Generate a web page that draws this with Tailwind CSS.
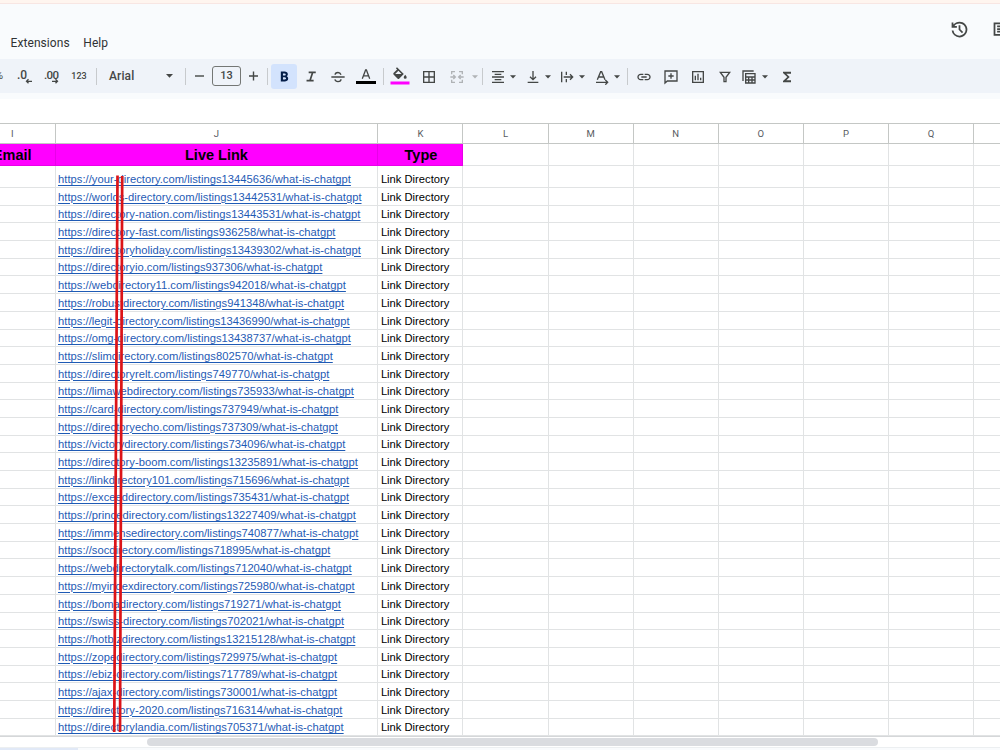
<!DOCTYPE html>
<html lang="en">
<head>
    <meta charset="UTF-8">
    <meta name="viewport" content="width=device-width, initial-scale=1.0">
    <title>Live Links - Sheet</title>
    <script src="https://cdn.jsdelivr.net/npm/@tailwindcss/browser@4"></script>
</head>
<body class="relative flex flex-col w-[1000px] h-[750px] overflow-hidden bg-white font-['Roboto',sans-serif] text-[#444746]">
    <!-- Menu bar -->
    <header class="flex h-[59px] w-full shrink-0 justify-between overflow-hidden border-t-[3px] border-[#fff5ef] bg-[#f9fbfd]">
        <div class="flex w-full justify-between border-t border-[#f8e6e3]">
            <nav class="flex gap-[13.5px] pl-[10.5px] pt-[31px] text-[12px] leading-[17px] tracking-[0.08px] text-[#303234]">
                <a>Extensions</a>
                <a>Help</a>
            </nav>
            <div class="flex pt-[15px]">
                <svg class="mr-[21px] size-[21px]" viewBox="0 0 24 24" fill="currentColor"><path d="M12 21q-3.45 0-6.013-2.288T3.05 13H5.1q.35 2.6 2.313 4.3T12 19q2.925 0 4.963-2.038T19 12t-2.037-4.962T12 5q-1.725 0-3.225.8T6.25 8H9v2H3V4h2v2.35q1.275-1.6 3.113-2.475T12 3q1.875 0 3.513.713t2.85 1.924t1.925 2.85T21 12t-.712 3.513t-1.925 2.85t-2.85 1.925T12 21m2.8-4.8L11 12.4V7h2v4.6l3.2 3.2z"/></svg>
                <svg class="-mr-[12px] size-[21px]" viewBox="0 0 24 24" fill="none" stroke="currentColor" stroke-width="2"><path d="M4 5h16v13H4zM7 8.500h10M7 11.500h10M7 14.500h7"/></svg>
            </div>
        </div>
    </header>

    <!-- Toolbar -->
    <div class="flex h-[34px] shrink-0 items-center overflow-hidden bg-[#eff3f9] text-[12px]">
        <span class="flex w-[10px] justify-end pr-[7px] text-[11px]">%</span>
        <span class="flex w-7 justify-center"><svg class="h-4 w-[15px]" viewBox="0 0 15 16"><text x="0" y="10.5" font-size="12" font-weight="500" fill="currentColor">.0</text><path d="M15 13.300H9.500M11.500 11.300l-2 2 2 2" fill="none" stroke="currentColor" stroke-width="1.3"/></svg></span>
        <span class="flex w-[27px] justify-center"><svg class="h-4 w-[15px]" viewBox="0 0 15 16"><text x="0" y="10.5" font-size="11.5" font-weight="500" fill="currentColor" textLength="15">.00</text><path d="M8 13.300h5.500M11.500 11.300l2 2-2 2" fill="none" stroke="currentColor" stroke-width="1.3"/></svg></span>
        <span class="w-7 pt-px text-center text-[9px] font-medium">123</span>
        <span class="mx-[3px] h-[17px] w-px bg-[#c7cacd]"></span>
        <button class="flex w-[84px] items-center justify-between pl-[9px] pr-[11px] text-[12px] font-medium tracking-[0.1px]">
            <span>Arial</span>
            <svg class="h-1 w-[7px]" viewBox="0 0 7 4" fill="currentColor"><path d="M0 0h7L3.500 3.700z"/></svg>
        </button>
        <span class="mx-px h-[17px] w-px bg-[#c7cacd]"></span>
        <svg class="h-3 w-[25px]" viewBox="0 0 25 12" stroke="currentColor" stroke-width="1.4"><path d="M8 6h9"/></svg>
        <span class="flex h-[20px] w-[29px] items-center justify-center rounded-[3px] border border-[#747775] text-[11px] font-medium">13</span>
        <svg class="h-3 w-[25px]" viewBox="0 0 25 12" stroke="currentColor" stroke-width="1.4"><path d="M8 6h9M12.500 1.500v9"/></svg>
        <span class="mx-px h-[17px] w-px bg-[#c7cacd]"></span>
        <span class="ml-[2px] flex h-[25px] w-[26px] items-center justify-center rounded-[3px] bg-[#d3e3fd] text-[#041e49]">
            <svg class="size-[17px]" viewBox="0 0 24 24" fill="currentColor"><path d="M6.8 19V5h5.525q1.625 0 3 1T16.7 8.775q0 1.275-.575 1.963t-1.075.987q.625.275 1.388 1.025T17.2 15q0 2.225-1.625 3.113t-3.05.887zm3.025-2.8h2.6q1.2 0 1.463-.612t.262-.888t-.262-.887t-1.538-.613H9.825zm0-5.7h2.325q.825 0 1.2-.425t.375-.95q0-.6-.425-.975t-1.1-.375H9.825z"/></svg>
        </span>
        <span class="flex w-7 justify-center pt-px"><svg class="size-[17px]" viewBox="0 0 24 24" fill="currentColor"><path d="M5 19v-2.500h4l3-9H8V5h10v2.500h-3.500l-3 9H15V19z"/></svg></span>
        <span class="flex w-[26px] justify-center pt-px"><svg class="size-4" viewBox="0 0 24 24" fill="none" stroke="currentColor" stroke-width="2"><path d="M2 12h20M16.500 8.500C15.800 6.500 14.300 5.200 12 5.200c-2.600 0-4.300 1.300-4.300 3.400M7.300 15.500c.6 2.100 2.300 3.400 4.700 3.400 2.700 0 4.500-1.300 4.500-3.600"/></svg></span>
        <span class="flex w-[30px] justify-center"><svg class="h-[17px] w-5" viewBox="0 0 20 17" fill="none"><path d="M6.300 10.800 9.600 2h.8L13.700 10.800M7.500 7.900h5" stroke="currentColor" stroke-width="1.300"/><path d="M0 13h20v3H0z" fill="#000"/></svg></span>
        <span class="mx-[1.5px] h-[17px] w-px bg-[#c7cacd]"></span>
        <span class="flex w-[30px] justify-center"><svg class="h-[19px] w-5" viewBox="0 0 20 19"><path d="M5.900 1.300 7 .2l6.800 6.800-4.700 4.700q-.7.500-1.400 0L3.500 7.500q-.5-.7 0-1.400L7.100 2.500zM8.400 3.700 5.200 7h6.400z" fill="currentColor" fill-rule="evenodd"/><path d="M15.200 7.700q1.500 1.700 1.500 2.500a1.500 1.500 0 0 1-3 0q0-.8 1.500-2.500" fill="currentColor"/><path d="M.5 14.500h19v3H.5z" fill="#f0f"/></svg></span>
        <span class="flex w-[27px] justify-center pt-px"><svg class="size-4" viewBox="0 0 24 24" fill="none" stroke="currentColor" stroke-width="2"><path d="M4 4h16v16H4zM12 4v16M4 12h16"/></svg></span>
        <span class="flex w-[37px] items-center justify-end gap-[7px] pr-px pt-px text-[#b0b3b6]">
            <svg class="size-4" viewBox="0 0 24 24" fill="none" stroke="currentColor" stroke-width="2"><path d="M9 4H4v4M15 4h5v4M9 20H4v-4M15 20h5v-4M2 12h7M6.500 9l3 3-3 3M22 12h-7M17.500 9l-3 3 3 3"/></svg>
            <svg class="h-1 w-[6px]" viewBox="0 0 7 4" fill="currentColor"><path d="M0 0h7L3.500 3.700z"/></svg>
        </span>
        <span class="mx-[3px] h-[17px] w-px bg-[#c7cacd]"></span>
        <span class="flex w-[34.5px] items-center justify-center gap-1 pt-px">
            <svg class="size-4" viewBox="0 0 24 24" fill="none" stroke="currentColor" stroke-width="2"><path d="M3 4h18M7 8h10M3 12h18M7 16h10M3 20h18"/></svg>
            <svg class="h-1 w-[6px]" viewBox="0 0 7 4" fill="currentColor"><path d="M0 0h7L3.500 3.700z"/></svg>
        </span>
        <span class="flex w-[34.5px] items-center justify-center gap-1 pt-px">
            <svg class="size-4" viewBox="0 0 24 24" fill="none" stroke="currentColor" stroke-width="2"><path d="M4 20h16M12 3v13M7.500 11.500l4.500 4.500 4.500-4.500"/></svg>
            <svg class="h-1 w-[6px]" viewBox="0 0 7 4" fill="currentColor"><path d="M0 0h7L3.500 3.700z"/></svg>
        </span>
        <span class="flex w-[34.5px] items-center justify-center gap-1 pt-px">
            <svg class="size-4" viewBox="0 0 24 24" fill="none" stroke="currentColor" stroke-width="2"><path d="M4 4v16M11 4v5M11 15v5M7 12h13M16.500 8l4 4-4 4"/></svg>
            <svg class="h-1 w-[6px]" viewBox="0 0 7 4" fill="currentColor"><path d="M0 0h7L3.500 3.700z"/></svg>
        </span>
        <span class="flex w-[34.5px] items-center justify-center gap-1 pt-px">
            <svg class="size-4" viewBox="0 0 24 24" fill="none" stroke="currentColor" stroke-width="2"><path d="M5 16 10 4h1.500l5 12M7 12h7.500M3 20h17M17 16.500l3.500 3.500-3.500 3.500"/></svg>
            <svg class="h-1 w-[6px]" viewBox="0 0 7 4" fill="currentColor"><path d="M0 0h7L3.500 3.700z"/></svg>
        </span>
        <span class="ml-[3px] mr-[2px] h-[17px] w-px bg-[#c7cacd]"></span>
        <span class="flex w-[27px] justify-center pt-px"><svg class="size-4" viewBox="0 0 24 24" fill="currentColor"><path d="M11 17H7q-2.075 0-3.537-1.463T2 12t1.463-3.537T7 7h4v2H7q-1.250 0-2.125.875T4 12t.875 2.125T7 15h4zm-3-4v-2h8v2zm5 4v-2h4q1.250 0 2.125-.875T20 12t-.875-2.125T17 9h-4V7h4q2.075 0 3.538 1.463T22 12t-1.463 3.538T17 17z"/></svg></span>
        <span class="flex w-[27px] justify-center pt-px"><svg class="size-4" viewBox="0 0 24 24" fill="none" stroke="currentColor" stroke-width="2"><path d="M3 3h18v15H6.500L3 21zM12 6.500v8M8 10.500h8"/></svg></span>
        <span class="flex w-[27px] justify-center pt-px"><svg class="size-4" viewBox="0 0 24 24" fill="none" stroke="currentColor" stroke-width="2"><path d="M4 4h16v16H4zM8 10v7M12 7v10M16 13v4"/></svg></span>
        <span class="flex w-[27px] justify-center pt-px"><svg class="size-4" viewBox="0 0 24 24" fill="none" stroke="currentColor" stroke-width="2"><path d="M5 5h14l-5.500 7.500V19h-3v-6.500z"/></svg></span>
        <span class="flex w-[35px] items-center gap-[5px] pl-[3px] pt-px">
            <svg class="size-4" viewBox="0 0 24 24" fill="none" stroke="currentColor" stroke-width="2"><path d="M3 18V3h16M7 7h14v14H7zM7 12h14M7 16.500h14M11.500 12v9M16.500 12v9"/></svg>
            <svg class="h-1 w-[6px]" viewBox="0 0 7 4" fill="currentColor"><path d="M0 0h7L3.500 3.700z"/></svg>
        </span>
        <span class="flex w-7 justify-center pt-px"><svg class="size-4" viewBox="0 0 24 24" fill="currentColor"><path d="M6 20v-2l6.500-6L6 6V4h12v3h-7l5 5-5 5h7v3z"/></svg></span>
    </div>
    <div class="h-[6px] shrink-0 bg-[#f9fbfd]"></div>

    <!-- Sheet -->
    <main class="mt-6 w-full shrink-0 overflow-hidden font-['Liberation_Sans',sans-serif]">
        <div id="letters" class="flex h-[21px] border-y border-[#c4c7c5] text-[9.5px] leading-[19px] font-['Roboto',sans-serif] text-[#575b5f]"></div>
        <div id="grid" class="border-b border-[#d5d7d9]"></div>
    </main>

    <!-- Horizontal scrollbar and sheet tabs edge -->
    <div class="flex h-[10px] shrink-0 items-center pl-[147px]">
        <div class="h-2 w-[731px] rounded-full bg-[#dadce0]"></div>
    </div>
    <footer class="flex grow border-t border-[#eceff1] bg-[#f9fbfd]">
        <div class="w-[78px] bg-[#e1e9f7]"></div>
    </footer>

    <!-- Red marker strokes over the links -->
    <svg class="absolute left-[110px] top-[170px] h-[570px] w-5" viewBox="0 0 20 570" stroke="#dc1418" stroke-width="2.7">
        <path d="M7.500 5.500 4.200 562M12.200 6 10 562"/>
    </svg>

    <script>
        const links = [
            'your-directory.com/listings13445636',
            'worlds-directory.com/listings13442531',
            'directory-nation.com/listings13443531',
            'directory-fast.com/listings936258',
            'directoryholiday.com/listings13439302',
            'directoryio.com/listings937306',
            'webdirectory11.com/listings942018',
            'robustdirectory.com/listings941348',
            'legit-directory.com/listings13436990',
            'omg-directory.com/listings13438737',
            'slimdirectory.com/listings802570',
            'directoryrelt.com/listings749770',
            'limawebdirectory.com/listings735933',
            'card-directory.com/listings737949',
            'directoryecho.com/listings737309',
            'victorydirectory.com/listings734096',
            'directory-boom.com/listings13235891',
            'linkdirectory101.com/listings715696',
            'exceeddirectory.com/listings735431',
            'princedirectory.com/listings13227409',
            'immensedirectory.com/listings740877',
            'socdirectory.com/listings718995',
            'webdirectorytalk.com/listings712040',
            'myindexdirectory.com/listings725980',
            'bomadirectory.com/listings719271',
            'swiss-directory.com/listings702021',
            'hotbizdirectory.com/listings13215128',
            'zopedirectory.com/listings729975',
            'ebiz-directory.com/listings717789',
            'ajax-directory.com/listings730001',
            'directory-2020.com/listings716314',
            'directorylandia.com/listings705371'
        ];

        const widths = ['w-[55.5px]', 'w-[322.9px]'];
        const cellWidth = i => widths[i] || 'w-[85.1px]';

        document.getElementById('letters').innerHTML = ['I', 'J', 'K', 'L', 'M', 'N', 'O', 'P', 'Q', ''].map((letter, i) =>
            `<div class="${cellWidth(i)} ${i === 0 ? 'pr-[30px]' : ''} shrink-0 border-r border-[#c4c7c5] text-center">${letter}</div>`
        ).join('');

        function row(cells, height, header) {
            return `<div class="flex ${height}">` + Array.from({ length: 10 }, (_, i) => {
                const fill = header && i < 3
                    ? 'bg-[#ff00ff] border-[#e800e8] text-black font-bold text-[14.5px] text-center leading-[20px]'
                    : 'border-[#e1e3e4] text-[11.2px] leading-[15px]';
                return `<div class="${cellWidth(i)} ${fill} flex shrink-0 flex-col justify-end overflow-hidden whitespace-nowrap border-b border-r">${cells[i] || ''}</div>`;
            }).join('') + '</div>';
        }

        document.getElementById('grid').innerHTML =
            row(['<span class="pr-[23px] -ml-3 text-right">Email</span>', 'Live Link', '<span class="pl-px">Type</span>'], 'h-[22px]', true) +
            links.map((link, i) => row([
                '',
                `<a class="pl-[2.5px] tracking-[0.025px] text-[#1f5bb5] underline underline-offset-[1.5px]">https://${link}/what-is-chatgpt</a>`,
                '<span class="pl-[2.5px] text-black">Link Directory</span>'
            ], i === 0 ? 'h-[22px]' : 'h-[17.69px]', false)).join('');
    </script>
</body>
</html>
